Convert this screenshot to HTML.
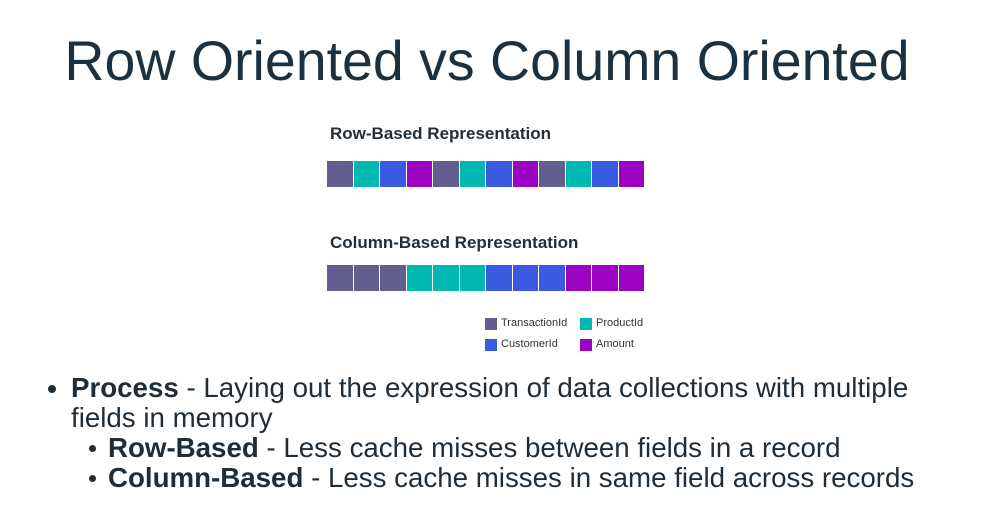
<!DOCTYPE html>
<html><head><meta charset="utf-8"><style>
body{margin:0;width:986px;height:519px;background:#fff;position:relative;overflow:hidden;font-family:"Liberation Sans",sans-serif;color:#1f2d38}
.t{position:absolute;left:0;width:974px;text-align:center;top:29px;font-size:55.5px;color:#1c3040;white-space:nowrap}
.h{position:absolute;font-weight:bold;font-size:17px;color:#222e38}
.bar{position:absolute;left:327px;display:flex;gap:1px}
.bar div{width:25.5px;height:26px}
.a{background:#625e90}.b{background:#00b8b2}.c{background:#3b5ae2}.d{background:#9b02c2}
.lg{position:absolute;font-size:11px;color:#333}
.lg i{position:absolute;width:12px;height:12px;left:0;top:1px}
.lg span{position:absolute;left:16px;top:0;white-space:nowrap}
.l{position:absolute;font-size:27.7px;white-space:nowrap;line-height:30px}
.dot{position:absolute;width:8px;height:8px;border-radius:50%;background:#1f2d38}
</style></head><body>
<div class="t">Row Oriented vs Column Oriented</div>
<div class="h" style="left:330px;top:124px">Row-Based Representation</div>
<div class="bar" style="top:161px"><div class="a"></div><div class="b"></div><div class="c"></div><div class="d"></div><div class="a"></div><div class="b"></div><div class="c"></div><div class="d"></div><div class="a"></div><div class="b"></div><div class="c"></div><div class="d"></div></div>
<div class="h" style="left:330px;top:233px">Column-Based Representation</div>
<div class="bar" style="top:265px"><div class="a"></div><div class="a"></div><div class="a"></div><div class="b"></div><div class="b"></div><div class="b"></div><div class="c"></div><div class="c"></div><div class="c"></div><div class="d"></div><div class="d"></div><div class="d"></div></div>
<div class="lg" style="left:485px;top:317px"><i class="a"></i><span>TransactionId</span></div>
<div class="lg" style="left:580px;top:317px"><i class="b"></i><span>ProductId</span></div>
<div class="lg" style="left:485px;top:338px"><i class="c"></i><span>CustomerId</span></div>
<div class="lg" style="left:580px;top:338px"><i class="d"></i><span>Amount</span></div>
<div class="dot" style="left:48px;top:385px"></div>
<div class="l" style="left:71px;top:373px"><b>Process</b> - Laying out the expression of data collections with multiple</div>
<div class="l" style="left:71px;top:403px">fields in memory</div>
<div class="dot" style="left:89px;top:445px;width:7px;height:7px"></div>
<div class="l" style="left:108px;top:433px"><b>Row-Based</b> - Less cache misses between fields in a record</div>
<div class="dot" style="left:89px;top:475px;width:7px;height:7px"></div>
<div class="l" style="left:108px;top:463px"><b>Column-Based</b> - Less cache misses in same field across records</div>
</body></html>
